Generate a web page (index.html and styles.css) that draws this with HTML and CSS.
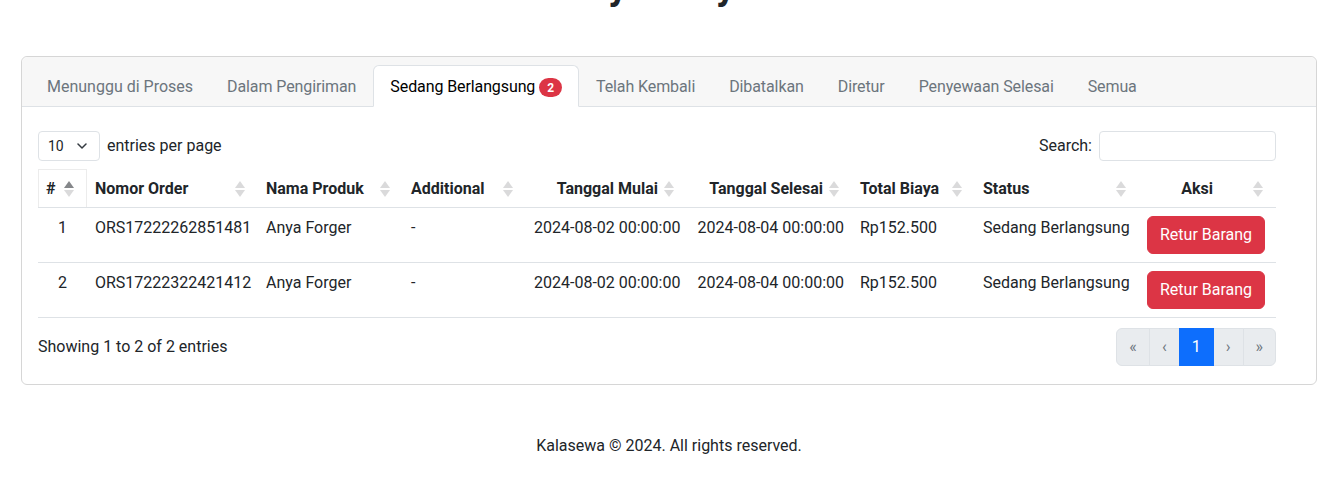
FILE: index.html
```html
<!DOCTYPE html>
<html lang="id">
<head>
<meta charset="utf-8">
<title>Riwayat Saya - Kalasewa</title>
<link rel="stylesheet" href="styles.css">
</head>
<body>
<main class="page">
  <h1 class="page-title">Riwayat Saya</h1>

  <section class="card">
    <div class="card-header">
      <ul class="tabs">
        <li class="tab">Menunggu di Proses</li>
        <li class="tab">Dalam Pengiriman</li>
        <li class="tab active">Sedang Berlangsung <span class="badge">2</span></li>
        <li class="tab">Telah Kembali</li>
        <li class="tab">Dibatalkan</li>
        <li class="tab">Diretur</li>
        <li class="tab">Penyewaan Selesai</li>
        <li class="tab">Semua</li>
      </ul>
    </div>

    <div class="card-body">
      <div class="dt-top">
        <div class="dt-length">
          <div class="select">10
            <svg class="chev" width="10" height="6" viewBox="0 0 10 6"><path d="M1 1l4 4 4-4" fill="none" stroke="#343a40" stroke-width="1.5" stroke-linecap="round" stroke-linejoin="round"/></svg>
          </div>
          <span>entries per page</span>
        </div>
        <div class="dt-search">
          <span>Search:</span>
          <div class="input"></div>
        </div>
      </div>

      <table class="dt-table">
        <colgroup>
          <col class="c1"><col class="c2"><col class="c3"><col class="c4"><col class="c5"><col class="c6"><col class="c7"><col class="c8"><col class="c9">
        </colgroup>
        <thead>
          <tr>
            <th class="sorted"><div class="sorter"><span class="lbl">#</span><svg class="arr" width="10" height="16" viewBox="0 0 10 16"><polygon class="up on" points="0,7 5,0 10,7"/><polygon class="dn" points="0,9 5,16 10,9"/></svg></div></th>
            <th><div class="sorter"><span class="lbl">Nomor Order</span><svg class="arr" width="10" height="16" viewBox="0 0 10 16"><polygon class="up" points="0,7 5,0 10,7"/><polygon class="dn" points="0,9 5,16 10,9"/></svg></div></th>
            <th><div class="sorter"><span class="lbl">Nama Produk</span><svg class="arr" width="10" height="16" viewBox="0 0 10 16"><polygon class="up" points="0,7 5,0 10,7"/><polygon class="dn" points="0,9 5,16 10,9"/></svg></div></th>
            <th><div class="sorter"><span class="lbl">Additional</span><svg class="arr" width="10" height="16" viewBox="0 0 10 16"><polygon class="up" points="0,7 5,0 10,7"/><polygon class="dn" points="0,9 5,16 10,9"/></svg></div></th>
            <th class="end"><div class="sorter"><span class="lbl">Tanggal Mulai</span><svg class="arr" width="10" height="16" viewBox="0 0 10 16"><polygon class="up" points="0,7 5,0 10,7"/><polygon class="dn" points="0,9 5,16 10,9"/></svg></div></th>
            <th class="end"><div class="sorter"><span class="lbl">Tanggal Selesai</span><svg class="arr" width="10" height="16" viewBox="0 0 10 16"><polygon class="up" points="0,7 5,0 10,7"/><polygon class="dn" points="0,9 5,16 10,9"/></svg></div></th>
            <th><div class="sorter"><span class="lbl">Total Biaya</span><svg class="arr" width="10" height="16" viewBox="0 0 10 16"><polygon class="up" points="0,7 5,0 10,7"/><polygon class="dn" points="0,9 5,16 10,9"/></svg></div></th>
            <th><div class="sorter"><span class="lbl">Status</span><svg class="arr" width="10" height="16" viewBox="0 0 10 16"><polygon class="up" points="0,7 5,0 10,7"/><polygon class="dn" points="0,9 5,16 10,9"/></svg></div></th>
            <th class="center"><div class="sorter"><span class="lbl">Aksi</span><svg class="arr" width="10" height="16" viewBox="0 0 10 16"><polygon class="up" points="0,7 5,0 10,7"/><polygon class="dn" points="0,9 5,16 10,9"/></svg></div></th>
          </tr>
        </thead>
        <tbody>
          <tr>
            <td class="center">1</td>
            <td>ORS17222262851481</td>
            <td>Anya Forger</td>
            <td>-</td>
            <td class="end">2024-08-02 00:00:00</td>
            <td class="end">2024-08-04 00:00:00</td>
            <td>Rp152.500</td>
            <td>Sedang Berlangsung</td>
            <td><button class="btn-danger">Retur Barang</button></td>
          </tr>
          <tr>
            <td class="center">2</td>
            <td>ORS17222322421412</td>
            <td>Anya Forger</td>
            <td>-</td>
            <td class="end">2024-08-02 00:00:00</td>
            <td class="end">2024-08-04 00:00:00</td>
            <td>Rp152.500</td>
            <td>Sedang Berlangsung</td>
            <td><button class="btn-danger">Retur Barang</button></td>
          </tr>
        </tbody>
      </table>

      <div class="dt-bottom">
        <div class="dt-info">Showing 1 to 2 of 2 entries</div>
        <ul class="pagination">
          <li class="pg disabled">«</li>
          <li class="pg disabled">‹</li>
          <li class="pg active">1</li>
          <li class="pg disabled">›</li>
          <li class="pg disabled">»</li>
        </ul>
      </div>
    </div>
  </section>

  <footer class="footer">Kalasewa © 2024. All rights reserved.</footer>
</main>
</body>
</html>
```
FILE: styles.css
```css
* { box-sizing: border-box; }

body {
  margin: 0;
  font-family: Roboto, "Liberation Sans", Arial, sans-serif;
  font-size: 16px;
  line-height: 24px;
  color: #212529;
  background: #fff;
}

.page {
  padding: 0 24px 0 21px;
}

.page-title {
  margin: -37px 0 46px;
  padding-right: 58px;
  font-size: 39px;
  line-height: 47px;
  font-weight: 700;
  text-align: center;
  color: #212529;
}

.card {
  border: 1px solid #d6d6d6;
  border-radius: 6px;
  background: #fff;
}

.card-header {
  background: #f7f7f7;
  border-bottom: 1px solid #dee2e6;
  border-radius: 6px 6px 0 0;
  padding: 8px 8px 0;
}

.tabs {
  list-style: none;
  margin: 0 0 -1px;
  padding: 0;
  display: flex;
}

.tab {
  padding: 9px 16px 7px;
  border: 1px solid transparent;
  border-radius: 6px 6px 0 0;
  color: #6c757d;
  white-space: nowrap;
  letter-spacing: -0.1px;
}

.tab:first-child { letter-spacing: 0; }

.tab.active {
  background: #fff;
  border-color: #dee2e6 #dee2e6 #fff;
  color: #000;
}

.badge {
  display: inline-block;
  padding: 4px 8px 3px;
  font-size: 12px;
  line-height: 12px;
  font-weight: 700;
  letter-spacing: 0;
  color: #fff;
  background: #dc3545;
  border-radius: 10px;
  vertical-align: 0;
}

.card-body {
  padding: 16px 40px 16px 16px;
}

.dt-top {
  display: flex;
  justify-content: space-between;
  align-items: center;
  padding: 8px 0;
}

.dt-length {
  display: flex;
  align-items: center;
  gap: 7px;
}

.select {
  width: 62px;
  height: 30px;
  border: 1px solid #dee2e6;
  border-radius: 4px;
  padding: 0 0 0 9px;
  font-size: 14px;
  display: flex;
  align-items: center;
  gap: 13px;
}

.dt-search {
  display: flex;
  align-items: center;
  gap: 7px;
}

.input {
  width: 177px;
  height: 30px;
  border: 1px solid #dee2e6;
  border-radius: 4px;
}

.dt-table {
  width: 1238px;
  table-layout: fixed;
  border-collapse: collapse;
}

.c1 { width: 49px; }
.c2 { width: 171px; }
.c3 { width: 145px; }
.c4 { width: 123px; }
.c5 { width: 161px; }
.c6 { width: 165px; }
.c7 { width: 123px; }
.c8 { width: 164px; }
.c9 { width: 137px; }

.dt-table th {
  padding: 8px 8px 6px;
  font-weight: 700;
  text-align: left;
  border-bottom: 1px solid #dee2e6;
  white-space: nowrap;
}

.dt-table th.sorted {
  box-shadow: inset 1px 1px 0 #ececec, inset -1px 0 0 #ececec;
}

.sorter {
  display: flex;
  align-items: center;
  gap: 6px;
}

.lbl { flex: 1; }

.end .lbl { text-align: right; }
.center .lbl { text-align: center; }

.arr { margin-right: 5px; flex: none; }
.arr polygon { fill: #212529; opacity: 0.17; }
.arr polygon.on { opacity: 0.55; }

.dt-table td {
  padding: 8px;
  vertical-align: top;
  border-bottom: 1px solid #dee2e6;
  white-space: nowrap;
}

.dt-table td.end { text-align: right; }
.dt-table td.center { text-align: center; }

.btn-danger {
  font: inherit;
  padding: 6px 12px;
  line-height: 24px;
  color: #fff;
  background: #dc3545;
  border: 1px solid #dc3545;
  border-radius: 6px;
}

.dt-bottom {
  display: flex;
  justify-content: space-between;
  align-items: center;
  padding: 10px 0 2px;
}

.pagination {
  list-style: none;
  margin: 0;
  padding: 0;
  display: flex;
}

.pg {
  padding: 6px 12px;
  line-height: 24px;
  border: 1px solid #dee2e6;
  margin-left: -1px;
  background: #e9ecef;
  color: #6c757d;
}

.pg:first-child { margin-left: 0; border-radius: 6px 0 0 6px; }
.pg:last-child { border-radius: 0 6px 6px 0; }

.pg.active {
  background: #0d6efd;
  border-color: #0d6efd;
  color: #fff;
  position: relative;
}

.footer {
  margin-top: 49px;
  text-align: center;
}
```
